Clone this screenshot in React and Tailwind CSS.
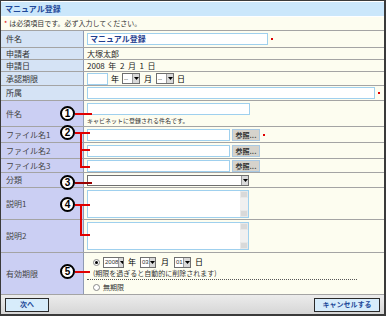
import React from 'react';

const jp = "font-['Noto_Sans_CJK_JP','Noto_Sans_CJK_SC',sans-serif]";

function Row({ label, h, lavender, children, col }) {
  return (
    <div className={`flex ${h} border-b border-[#a4a4a4]`}>
      <div
        className={`w-[83px] shrink-0 border-r border-[#8f9ab4] pl-[5px] flex items-center text-[8px] leading-none ${
          lavender ? 'bg-[#cbcff3] text-[#444]' : 'bg-[#d5e3f5] text-[#333]'
        }`}
      >
        {label}
      </div>
      <div className={`flex-1 bg-[#fdfdf0] pl-[3px] flex ${col ? 'flex-col justify-center' : 'items-center'}`}>
        {children}
      </div>
    </div>
  );
}

function Input({ w, children }) {
  return (
    <div className={`${w} h-[12px] bg-white border border-[#9fd0ee] text-[8px] leading-[10px] pl-[2px] text-[#1f3f8f] font-bold`}>
      {children}
    </div>
  );
}

function Star() {
  return <span className="ml-[3px] w-[2px] h-[2px] bg-[#e00000] inline-block" />;
}

function Arrow() {
  return (
    <svg width="5" height="3" viewBox="0 0 5 3">
      <path d="M0 0h5L2.5 3z" fill="#000" />
    </svg>
  );
}

function Select({ w, value }) {
  return (
    <div className={`${w} h-[11px] flex items-center bg-white border border-[#6f6f6f] overflow-hidden`}>
      <span className="flex-1 text-[6px] leading-none pl-[1px] text-[#333] font-['Liberation_Sans','Noto_Sans_CJK_JP',sans-serif]">{value}</span>
      <span className="w-[7px] shrink-0 h-full bg-[#d9d9d9] border-l border-[#999] flex items-center justify-center">
        <Arrow />
      </span>
    </div>
  );
}

function Browse() {
  return (
    <div className="ml-[2px] w-[28px] h-[12px] bg-[#d6d3cc] border border-[#a9c9e3] text-[7px] leading-[10px] text-center text-[#333] font-bold">
      参照...
    </div>
  );
}

function TextArea() {
  return (
    <div className="w-[162px] h-[28px] bg-white border border-[#9fd0ee] flex justify-end">
      <div className="w-[8px] h-full bg-[#f0f0f0] flex flex-col justify-between">
        <div className="h-[7px] bg-[#d9d9d9] border border-[#e8e8e8]" />
        <div className="h-[7px] bg-[#d9d9d9] border border-[#e8e8e8]" />
      </div>
    </div>
  );
}

function Radio({ checked }) {
  return (
    <span className="w-[7px] h-[7px] rounded-full border border-[#888] bg-white flex items-center justify-center">
      {checked && <span className="w-[3px] h-[3px] rounded-full bg-black" />}
    </span>
  );
}

function Num({ n }) {
  return (
    <span className="w-[15px] h-[15px] rounded-full border-2 border-black bg-white flex items-center justify-center text-[10px] font-bold leading-none text-black font-['Liberation_Sans',sans-serif]">
      {n}
    </span>
  );
}

export default function App() {
  return (
    <div className={`relative w-[386px] h-[316px] border border-[#3a3a3a] border-r-2 border-b-2 bg-[#fdfdf0] overflow-hidden ${jp}`}>
      {/* タイトル */}
      <div className="h-[16px] bg-[#cbe7fb] border-t border-white border-b border-[#7fb2dc] pl-[4px] flex items-center text-[8px] leading-none font-bold text-[#1f4a9a]">
        マニュアル登録
      </div>
      <div className="h-[14px] pl-[3px] flex items-center text-[7px] leading-none text-[#333] border-b border-[#a4a4a4]">
        <span className="text-[#e00000] mr-[2px]">*</span>は必須項目です。必ず入力してください。
      </div>

      <Row label="件名" h="h-[17px]">
        <Input w="w-[181px]">マニュアル登録</Input>
        <Star />
      </Row>
      <Row label="申請者" h="h-[12px]">
        <span className="text-[8px] leading-none text-[#222]">大塚太郎</span>
      </Row>
      <Row label="申請日" h="h-[12px]">
        <span className="text-[8px] leading-none text-[#222] whitespace-pre">2008  年  2  月  1  日</span>
      </Row>
      <Row label="承認期限" h="h-[14px]">
        <Input w="w-[21px]" />
        <span className="text-[8px] leading-none mx-[3px]">年</span>
        <Select w="w-[18px]" value="--" />
        <span className="text-[8px] leading-none mx-[4px]">月</span>
        <Select w="w-[18px]" value="--" />
        <span className="text-[8px] leading-none ml-[3px]">日</span>
      </Row>
      <Row label="所属" h="h-[15px]">
        <Input w="w-[288px]" />
        <Star />
      </Row>
      <Row label="件名" h="h-[26px]" lavender col>
        <Input w="w-[163px]" />
        <span className="text-[6px] mt-[3px] text-[#333] leading-none">キャビネットに登録される件名です。</span>
      </Row>
      <Row label="ファイル名1" h="h-[16px]" lavender>
        <Input w="w-[143px]" />
        <Browse />
        <Star />
      </Row>
      <Row label="ファイル名2" h="h-[16px]" lavender>
        <Input w="w-[143px]" />
        <Browse />
      </Row>
      <Row label="ファイル名3" h="h-[14px]" lavender>
        <Input w="w-[143px]" />
        <Browse />
      </Row>
      <Row label="分類" h="h-[15px]" lavender>
        <Select w="w-[162px]" value="" />
      </Row>
      <Row label="説明1" h="h-[32px]" lavender>
        <TextArea />
      </Row>
      <Row label="説明2" h="h-[33px]" lavender>
        <TextArea />
      </Row>
      <Row label="有効期限" h="h-[42px]" lavender col>
        <div className="flex items-center pl-[6px] text-[8px] leading-none">
          <Radio checked />
          <span className="ml-[3px]"><Select w="w-[21px]" value="2008" /></span>
          <span className="mx-[4px]">年</span>
          <Select w="w-[16px]" value="03" />
          <span className="mx-[5px]">月</span>
          <Select w="w-[17px]" value="01" />
          <span className="ml-[4px]">日</span>
        </div>
        <div className="w-[270px] border-b border-dotted border-[#555] pl-[6px] pt-[2px] pb-[2px] text-[7px] leading-none text-[#333]">
          (期限を過ぎると自動的に削除されます)
        </div>
        <div className="flex items-center gap-[3px] pl-[6px] mt-[4px] text-[7px] leading-none text-[#333]">
          <Radio />
          無期限
        </div>
      </Row>

      {/* フッター */}
      <div className="h-[19px] bg-gradient-to-b from-[#ececec] to-[#d6d6d6] flex items-center justify-between px-[4px]">
        <div className="w-[44px] h-[14px] bg-[#d7ecfb] border border-[#2a2a2a] text-[7px] leading-none font-bold text-[#1f4a9a] flex items-center justify-center">
          次へ
        </div>
        <div className="w-[66px] h-[14px] bg-[#d7ecfb] border border-[#2a2a2a] text-[7px] leading-none font-bold text-[#1f4a9a] flex items-center justify-center">
          キャンセルする
        </div>
      </div>

      {/* 注記番号 */}
      <div className="absolute left-[59px] top-[105px] flex items-center">
        <Num n="1" />
        <span className="w-[17px] h-[2px] bg-[#e00000]" />
      </div>
      <div className="absolute left-[59px] top-[124px] flex items-center">
        <Num n="2" />
        <span className="w-[6px] h-[2px] bg-[#e00000]" />
      </div>
      <div className="absolute left-[79px] top-[131px] w-[10px] h-[36px] border-l-2 border-[#e00000] flex flex-col justify-between">
        <span className="h-[2px] bg-[#e00000]" />
        <span className="h-[2px] bg-[#e00000]" />
        <span className="h-[2px] bg-[#e00000]" />
      </div>
      <div className="absolute left-[59px] top-[174px] flex items-center">
        <Num n="3" />
        <span className="w-[17px] h-[2px] bg-[#9a0000]" />
      </div>
      <div className="absolute left-[59px] top-[196px] flex items-center">
        <Num n="4" />
        <span className="w-[6px] h-[2px] bg-[#e00000]" />
      </div>
      <div className="absolute left-[79px] top-[203px] w-[10px] h-[32px] border-l-2 border-[#e00000] flex flex-col justify-between">
        <span className="h-[2px] bg-[#e00000]" />
        <span className="h-[2px] bg-[#e00000]" />
      </div>
      <div className="absolute left-[59px] top-[263px] flex items-center">
        <Num n="5" />
        <span className="w-[15px] h-[2px] bg-[#e00000]" />
      </div>
    </div>
  );
}
